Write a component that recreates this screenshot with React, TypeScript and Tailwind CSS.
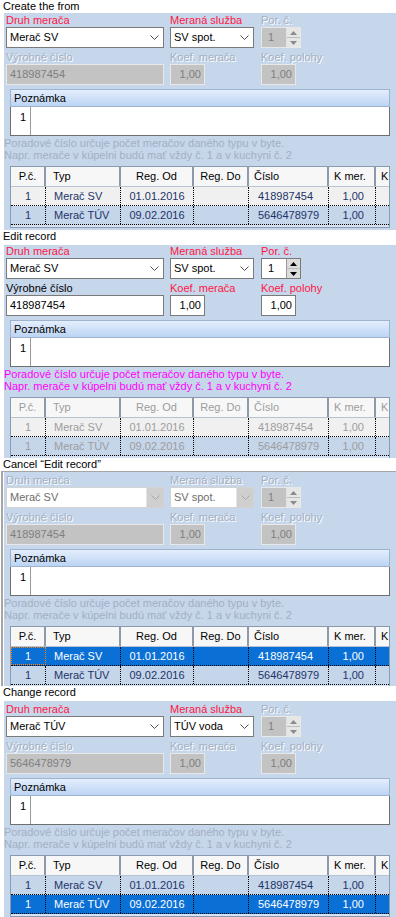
import React from 'react';

type Variant = 'create' | 'edit' | 'cancel' | 'change';
type Tone = 'red' | 'dis' | 'black';

const labelTone: Record<Tone, string> = {
    red: 'text-[#ff1744]',
    dis: 'text-[#a3b0c2] [text-shadow:1px_1px_0_#ffffff]',
    black: 'text-black',
};

function Label({ text, tone }: { text: string; tone: Tone }) {
    return <div className={`h-[13px] leading-[13px] whitespace-nowrap ${labelTone[tone]}`}>{text}</div>;
}

function Chevron({ color }: { color: string }) {
    return (
        <svg width="9" height="6" viewBox="0 0 9 6" className="block">
            <polyline points="0.5,0.5 4.5,4.5 8.5,0.5" fill="none" stroke={color} strokeWidth="1" />
        </svg>
    );
}

function Select({ value, mode }: { value: string; mode: 'on' | 'off' }) {
    if (mode === 'off') {
        return (
            <div className="h-[21px] flex border border-[#d2d2d2] bg-white">
                <div className="flex-1 pl-[3px] leading-[19px] text-[#6d6d6d] whitespace-nowrap overflow-hidden">{value}</div>
                <div className="w-[17px] bg-[#cfcfcf] border-l border-[#e4e4e4] flex items-center justify-center">
                    <Chevron color="#a8a8a8" />
                </div>
            </div>
        );
    }
    return (
        <div className="h-[21px] flex border border-[#7a7a7a] bg-white">
            <div className="flex-1 pl-[3px] leading-[19px] text-black whitespace-nowrap overflow-hidden">{value}</div>
            <div className="w-[17px] flex items-center justify-center">
                <Chevron color="#505050" />
            </div>
        </div>
    );
}

function Input({ value, mode, right, w }: { value: string; mode: 'on' | 'off'; right?: boolean; w: string }) {
    const box = mode === 'on'
        ? 'bg-white border-[#7a7a7a] text-black'
        : 'bg-[#c3c3c3] border-[#e8e8e8] text-[#7f7f7f]';
    return (
        <div className={`h-[21px] border ${box} ${w} leading-[19px] px-[3px] whitespace-nowrap ${right ? 'text-right' : ''}`}>
            {value}
        </div>
    );
}

function Arrow({ up, color }: { up: boolean; color: string }) {
    return (
        <svg width="7" height="4" viewBox="0 0 7 4" className="block">
            <polygon points={up ? '0,4 7,4 3.5,0' : '0,0 7,0 3.5,4'} fill={color} />
        </svg>
    );
}

function Spin({ mode }: { mode: 'on' | 'off' }) {
    const on = mode === 'on';
    return (
        <div className={`h-[21px] w-[40px] flex border ${on ? 'border-[#7a7a7a] bg-white' : 'border-[#e8e8e8] bg-[#c3c3c3]'}`}>
            <div className={`flex-1 leading-[19px] pl-[6px] ${on ? 'text-black' : 'text-[#7f7f7f]'}`}>1</div>
            <div className={`w-[14px] flex flex-col border-l ${on ? 'border-[#9a9a9a] bg-[#dcdcdc]' : 'border-[#e0e0e0] bg-[#e6e6e6]'}`}>
                <div className="flex-1 flex items-center justify-center border-b border-[#bdbdbd]">
                    <Arrow up color={on ? '#000000' : '#8a8a8a'} />
                </div>
                <div className="flex-1 flex items-center justify-center">
                    <Arrow up={false} color={on ? '#000000' : '#8a8a8a'} />
                </div>
            </div>
        </div>
    );
}

const cols = [
    { name: 'P.č.', w: 'w-[35px]', head: 'justify-center', cell: 'justify-center' },
    { name: 'Typ', w: 'w-[75px]', head: 'pl-[7px]', cell: 'pl-[8px]' },
    { name: 'Reg. Od', w: 'w-[73px]', head: 'justify-center', cell: 'justify-center' },
    { name: 'Reg. Do', w: 'w-[55px]', head: 'justify-center', cell: 'justify-center' },
    { name: 'Číslo', w: 'w-[80px]', head: 'pl-[5px]', cell: 'pl-[9px]' },
    { name: 'K mer.', w: 'w-[47px]', head: 'pl-[5px]', cell: 'justify-end pr-[11px]' },
    { name: 'K', w: 'w-[17px]', head: 'pl-[5px]', cell: '' },
];

const rows = [
    ['1', 'Merač SV', '01.01.2016', '', '418987454', '1,00', ''],
    ['1', 'Merač TÚV', '09.02.2016', '', '5646478979', '1,00', ''],
];

type RowKind = 'plain' | 'alt' | 'sel';

function Table({ dis, kinds, focusFirst }: { dis: boolean; kinds: RowKind[]; focusFirst?: boolean }) {
    return (
        <div className="mx-[6px] h-[62px] border border-[#8a9ab0] bg-[#d6e2f2] overflow-hidden">
            <div className="flex h-[20px] bg-[#f7f7f7] border-b border-[#b8c3d2]">
                {cols.map((c) => (
                    <div
                        key={c.name}
                        className={`${c.w} shrink-0 flex items-center ${c.head} border-r-2 border-[#8e9aaa] whitespace-nowrap ${dis ? 'text-[#9d9d9d]' : 'text-black'}`}
                    >
                        {c.name}
                    </div>
                ))}
            </div>
            {rows.map((r, i) => {
                const k = kinds[i];
                const bg = k === 'sel' ? 'bg-[#0a70d6]' : k === 'alt' ? 'bg-[#c5d5ea]' : 'bg-[#f0f0f0]';
                const fg = k === 'sel' ? 'text-white' : dis ? 'text-[#9d9d9d]' : 'text-[#1d3468]';
                return (
                    <div key={i} className={`flex h-[19px] ${bg} ${fg} border-b border-dotted border-black`}>
                        {r.map((v, j) => (
                            <div
                                key={j}
                                className={`${cols[j].w} shrink-0 flex items-center ${cols[j].cell} whitespace-nowrap border-r border-dotted border-black ${
                                    focusFirst && i === 0 && j === 0 ? 'outline outline-1 outline-dotted outline-[#ff8000] -outline-offset-1' : ''
                                }`}
                            >
                                {v}
                            </div>
                        ))}
                    </div>
                );
            })}
        </div>
    );
}

function Memo() {
    return (
        <div className="mx-[6px]">
            <div className="h-[18px] border border-[#9db3d0] bg-gradient-to-b from-[#e4eefc] to-[#bcd4f4] pl-[3px] leading-[16px] text-black">
                Poznámka
            </div>
            <div className="h-[29px] flex border border-t-0 border-[#6f6f6f] bg-white">
                <div className="w-[20px] border-r border-[#9a9a9a] text-right pr-[4px] leading-[16px] pt-[2px] text-black">1</div>
                <div className="flex-1" />
            </div>
        </div>
    );
}

const cfg: Record<Variant, {
    title: string;
    titleH: string;
    panelH: string;
    pt: string;
    druh: string;
    sluzba: string;
    cislo: string;
    tones: [Tone, Tone, Tone, Tone, Tone, Tone];
    selects: 'on' | 'off';
    fields: 'on' | 'off';
    hint: string;
    tableDis: boolean;
    kinds: RowKind[];
    focusFirst?: boolean;
    frame?: boolean;
}> = {
    create: {
        title: 'Create the from', titleH: 'h-[13px]', panelH: 'h-[217px]', pt: 'pt-[1px]',
        druh: 'Merač SV', sluzba: 'SV spot.', cislo: '418987454',
        tones: ['red', 'red', 'dis', 'dis', 'dis', 'dis'], selects: 'on', fields: 'off',
        hint: 'text-[#a3b0c2]', tableDis: false, kinds: ['plain', 'alt'],
    },
    edit: {
        title: 'Edit record', titleH: 'h-[15px]', panelH: 'h-[213px]', pt: 'pt-[0px]',
        druh: 'Merač SV', sluzba: 'SV spot.', cislo: '418987454',
        tones: ['red', 'red', 'red', 'black', 'red', 'red'], selects: 'on', fields: 'on',
        hint: 'text-[#ff00ff]', tableDis: true, kinds: ['plain', 'alt'],
    },
    cancel: {
        title: 'Cancel “Edit record”', titleH: 'h-[13px]', panelH: 'h-[214px]', pt: 'pt-[2px]',
        druh: 'Merač SV', sluzba: 'SV spot.', cislo: '418987454',
        tones: ['dis', 'dis', 'dis', 'dis', 'dis', 'dis'], selects: 'off', fields: 'off',
        hint: 'text-[#a3b0c2]', tableDis: false, kinds: ['sel', 'alt'], focusFirst: true, frame: true,
    },
    change: {
        title: 'Change record', titleH: 'h-[15px]', panelH: 'h-[217px]', pt: 'pt-[2px]',
        druh: 'Merač TÚV', sluzba: 'TÚV voda', cislo: '5646478979',
        tones: ['red', 'red', 'dis', 'dis', 'dis', 'dis'], selects: 'on', fields: 'off',
        hint: 'text-[#a3b0c2]', tableDis: false, kinds: ['alt', 'sel'],
    },
};

function Panel({ v }: { v: Variant }) {
    const c = cfg[v];
    return (
        <div>
            <div className={`${c.titleH} leading-[13px] pl-[3px] text-black whitespace-nowrap`}>{c.title}</div>
            <div className={c.frame ? 'ml-[1px] border-l-2 border-t border-[#a6a6a6] pl-[1px]' : 'ml-[4px]'}>
                <div className={`${c.panelH} bg-[#c6d6eb] ${c.pt} overflow-hidden`}>
                    <div className="grid grid-cols-[158px_84px_40px] gap-x-[6px] pl-[2px]">
                        <div>
                            <Label text="Druh merača" tone={c.tones[0]} />
                            <Select value={c.druh} mode={c.selects} />
                        </div>
                        <div>
                            <Label text="Meraná služba" tone={c.tones[1]} />
                            <Select value={c.sluzba} mode={c.selects} />
                        </div>
                        <div className="ml-[1px]">
                            <Label text="Por. č." tone={c.tones[2]} />
                            <Spin mode={c.fields} />
                        </div>
                        <div className="mt-[3px]">
                            <Label text="Výrobné číslo" tone={c.tones[3]} />
                            <Input value={c.cislo} mode={c.fields} w="w-[158px]" />
                        </div>
                        <div className="mt-[3px]">
                            <Label text="Koef. merača" tone={c.tones[4]} />
                            <Input value="1,00" mode={c.fields} right w="w-[35px]" />
                        </div>
                        <div className="mt-[3px] ml-[1px]">
                            <Label text="Koef. polohy" tone={c.tones[5]} />
                            <Input value="1,00" mode={c.fields} right w="w-[35px]" />
                        </div>
                    </div>
                    <div className="mt-[4px]">
                        <Memo />
                    </div>
                    <div className={`mt-[1px] leading-[12px] whitespace-nowrap ${c.hint}`}>
                        <div>Poradové číslo určuje počet meračov daného typu v byte.</div>
                        <div>Napr. merače v kúpelni budú mať vždy č. 1 a v kuchyni č. 2</div>
                    </div>
                    <div className="mt-[5px]">
                        <Table dis={c.tableDis} kinds={c.kinds} focusFirst={c.focusFirst} />
                    </div>
                </div>
            </div>
        </div>
    );
}

export default function App() {
    return (
        <div className="w-[396px] h-[917px] overflow-hidden bg-white text-[11px] font-['Liberation_Sans',Arial,sans-serif]">
            <Panel v="create" />
            <Panel v="edit" />
            <Panel v="cancel" />
            <Panel v="change" />
        </div>
    );
}
